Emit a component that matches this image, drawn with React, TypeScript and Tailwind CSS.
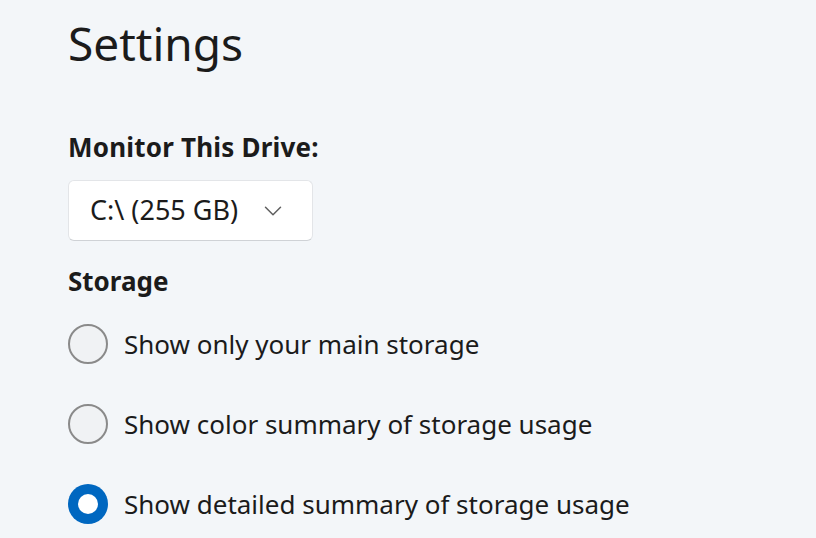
import { ChevronDown } from 'lucide-react';

const options = [
  { id: 'main', label: 'Show only your main storage', checked: false },
  { id: 'color', label: 'Show color summary of storage usage', checked: false },
  { id: 'detailed', label: 'Show detailed summary of storage usage', checked: true },
];

const Radio = ({ checked }: { checked: boolean }) =>
  checked ? (
    <span className="flex h-10 w-10 shrink-0 items-center justify-center rounded-full bg-[#0067c0]">
      <span className="h-5 w-5 rounded-full bg-white" />
    </span>
  ) : (
    <span className="h-10 w-10 shrink-0 rounded-full border-2 border-[#8a8a8a] bg-[#f0f2f4]" />
  );

export default function App() {
  return (
    <div
      className="h-[538px] w-[816px] overflow-hidden bg-[#f3f6f9] pl-[68px] text-[#1b1b1b]"
      style={{ fontFamily: '"Noto Sans", "Open Sans", sans-serif' }}
    >
      <h1 className="pt-[10px] text-[46px] leading-[66px]">Settings</h1>

      <h2 className="mt-[54px] text-[26px] font-bold leading-[34px] tracking-[0.2px]">Monitor This Drive:</h2>

      <button className="mt-[16px] flex h-[61px] w-[245px] items-center justify-between rounded-[6px] border border-[#e3e5e8] border-b-[#cfd2d6] bg-white pl-[21px] pr-[24px] text-[27px]">
        <span>C:\ (255 GB)</span>
        <ChevronDown className="h-[30px] w-[30px] text-[#5f5f5f]" strokeWidth={1.2} />
      </button>

      <h2 className="mt-[23px] text-[26px] font-bold leading-[34px]">Storage</h2>

      <div className="mt-[26px] flex flex-col gap-[40px]">
        {options.map((o) => (
          <label key={o.id} className="flex h-10 items-center gap-[16px] text-[26px]">
            <Radio checked={o.checked} />
            <span>{o.label}</span>
          </label>
        ))}
      </div>
    </div>
  );
}
